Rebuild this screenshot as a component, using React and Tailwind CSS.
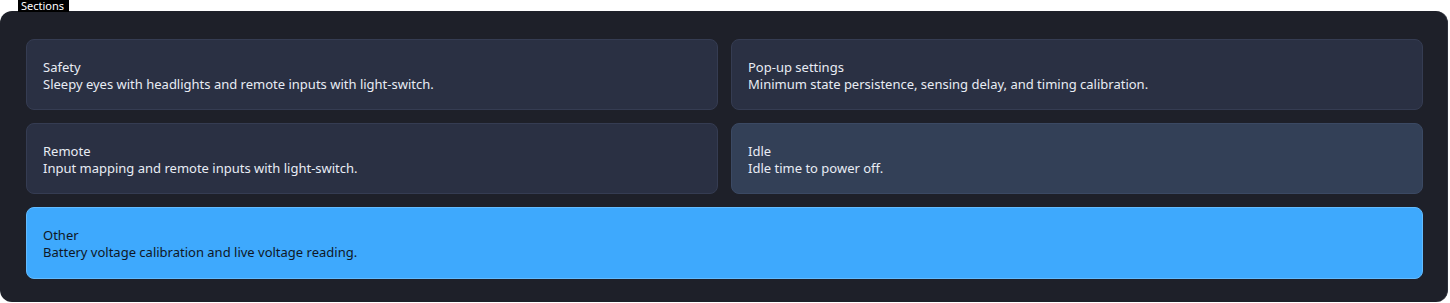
export default function App() {
  const font = { fontFamily: '"Segoe UI", "Noto Sans", "Open Sans", sans-serif' };
  const cards = [
    { t: "Safety", d: "Sleepy eyes with headlights and remote inputs with light-switch.", k: "n" },
    { t: "Pop-up settings", d: "Minimum state persistence, sensing delay, and timing calibration.", k: "n" },
    { t: "Remote", d: "Input mapping and remote inputs with light-switch.", k: "n" },
    { t: "Idle", d: "Idle time to power off.", k: "h" },
  ];
  const cls = {
    n: "bg-[#2a3043] border-[#353c52] text-[#e8ecf4]",
    h: "bg-[#334057] border-[#3b4963] text-[#e8ecf4]",
  };
  return (
    <div className="w-[1450px] h-[303px] bg-white flex flex-col" style={font}>
      <div className="ml-[18px] w-[51px] h-[12px] bg-black text-white text-[11px] leading-[12px] px-[3px] relative z-10 whitespace-nowrap">
        Sections
      </div>
      <div className="-mt-px w-[1448px] h-[291px] bg-[#1e2029] rounded-[12px] border-r border-[#2c2f3a] pt-[28px] pl-[26px] pr-[24px] pb-[23px]">
        <div className="grid grid-cols-2 gap-x-[13px] gap-y-[13px]">
          {cards.map((c) => (
            <div key={c.t} className={`h-[71px] rounded-[8px] border px-[16px] pt-[2px] flex flex-col justify-center text-[13px] leading-[17px] ${cls[c.k]}`}>
              <div>{c.t}</div>
              <div>{c.d}</div>
            </div>
          ))}
          <div className="col-span-2 h-[72px] rounded-[8px] border border-[#62bbff] bg-[#3ea9fd] text-[#0f1726] px-[16px] pt-[2px] flex flex-col justify-center text-[13px] leading-[17px]">
            <div>Other</div>
            <div>Battery voltage calibration and live voltage reading.</div>
          </div>
        </div>
      </div>
    </div>
  );
}
